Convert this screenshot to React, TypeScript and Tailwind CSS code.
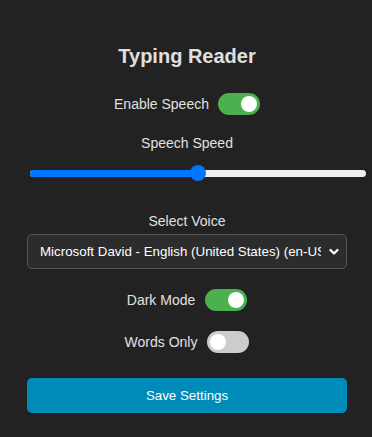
import { useState } from 'react';

function Toggle({ on, onClick }: { on: boolean; onClick: () => void }) {
  return (
    <button
      onClick={onClick}
      className={`relative w-[42px] h-[22px] rounded-full shrink-0 ${on ? 'bg-[#4caf50]' : 'bg-[#ccc]'}`}
    >
      <span
        className={`absolute top-[3px] w-[16px] h-[16px] rounded-full bg-white ${on ? 'left-[23px]' : 'left-[3px]'}`}
      />
    </button>
  );
}

export default function App() {
  const [speech, setSpeech] = useState(true);
  const [dark, setDark] = useState(true);
  const [wordsOnly, setWordsOnly] = useState(false);
  const speed = 50;

  return (
    <div className="w-full h-[437px] bg-[#222] text-[#e0e0e0] font-['Liberation_Sans',Arial,sans-serif] flex flex-col items-center pt-[45px] pl-[27px] pr-[25px] overflow-hidden">
      <h2 className="text-[20px] leading-[23px] font-bold">Typing Reader</h2>

      {/* Enable speech */}
      <div className="mt-[25px] flex items-center gap-[9px]">
        <span className="text-[14px] leading-[16px]">Enable Speech</span>
        <Toggle on={speech} onClick={() => setSpeech(!speech)} />
      </div>

      {/* Speed slider */}
      <div className="mt-[20px] text-[14px] leading-[16px]">Speech Speed</div>
      <div className="mt-[14px] self-start ml-[3px] w-[336px] h-[16px] relative flex items-center">
        <div className="w-full h-[7px] rounded-full bg-[#efefef] overflow-hidden">
          <div className="h-full bg-[#0075ff]" style={{ width: `${speed}%` }} />
        </div>
        <div
          className="absolute top-0 w-[16px] h-[16px] rounded-full bg-[#0075ff] -translate-x-1/2"
          style={{ left: `${speed}%` }}
        />
      </div>

      {/* Voice */}
      <div className="mt-[32px] text-[14px] leading-[16px]">Select Voice</div>
      <div className="mt-[5px] w-full h-[35px] rounded-[5px] border border-[#555] bg-[#2c2c2c] flex items-center pl-[12px] pr-[4px]">
        <span className="flex-1 overflow-hidden whitespace-nowrap text-[13.33px] text-white">
          Microsoft David - English (United States) (en-US)
        </span>
        <svg width="10" height="10" viewBox="0 0 10 10" className="ml-[8px] mr-[3px] shrink-0">
          <path d="M1.5 3 L5 6.5 L8.5 3" fill="none" stroke="white" strokeWidth="2.2" strokeLinecap="round" strokeLinejoin="round" />
        </svg>
      </div>

      <div className="mt-[20px] flex items-center gap-[10px]">
        <span className="text-[14px] leading-[16px]">Dark Mode</span>
        <Toggle on={dark} onClick={() => setDark(!dark)} />
      </div>

      <div className="mt-[20px] flex items-center gap-[10px]">
        <span className="text-[14px] leading-[16px]">Words Only</span>
        <Toggle on={wordsOnly} onClick={() => setWordsOnly(!wordsOnly)} />
      </div>

      <button className="mt-[25px] w-full h-[35px] rounded-[5px] bg-[#008cba] text-white text-[13.33px]">
        Save Settings
      </button>
    </div>
  );
}
